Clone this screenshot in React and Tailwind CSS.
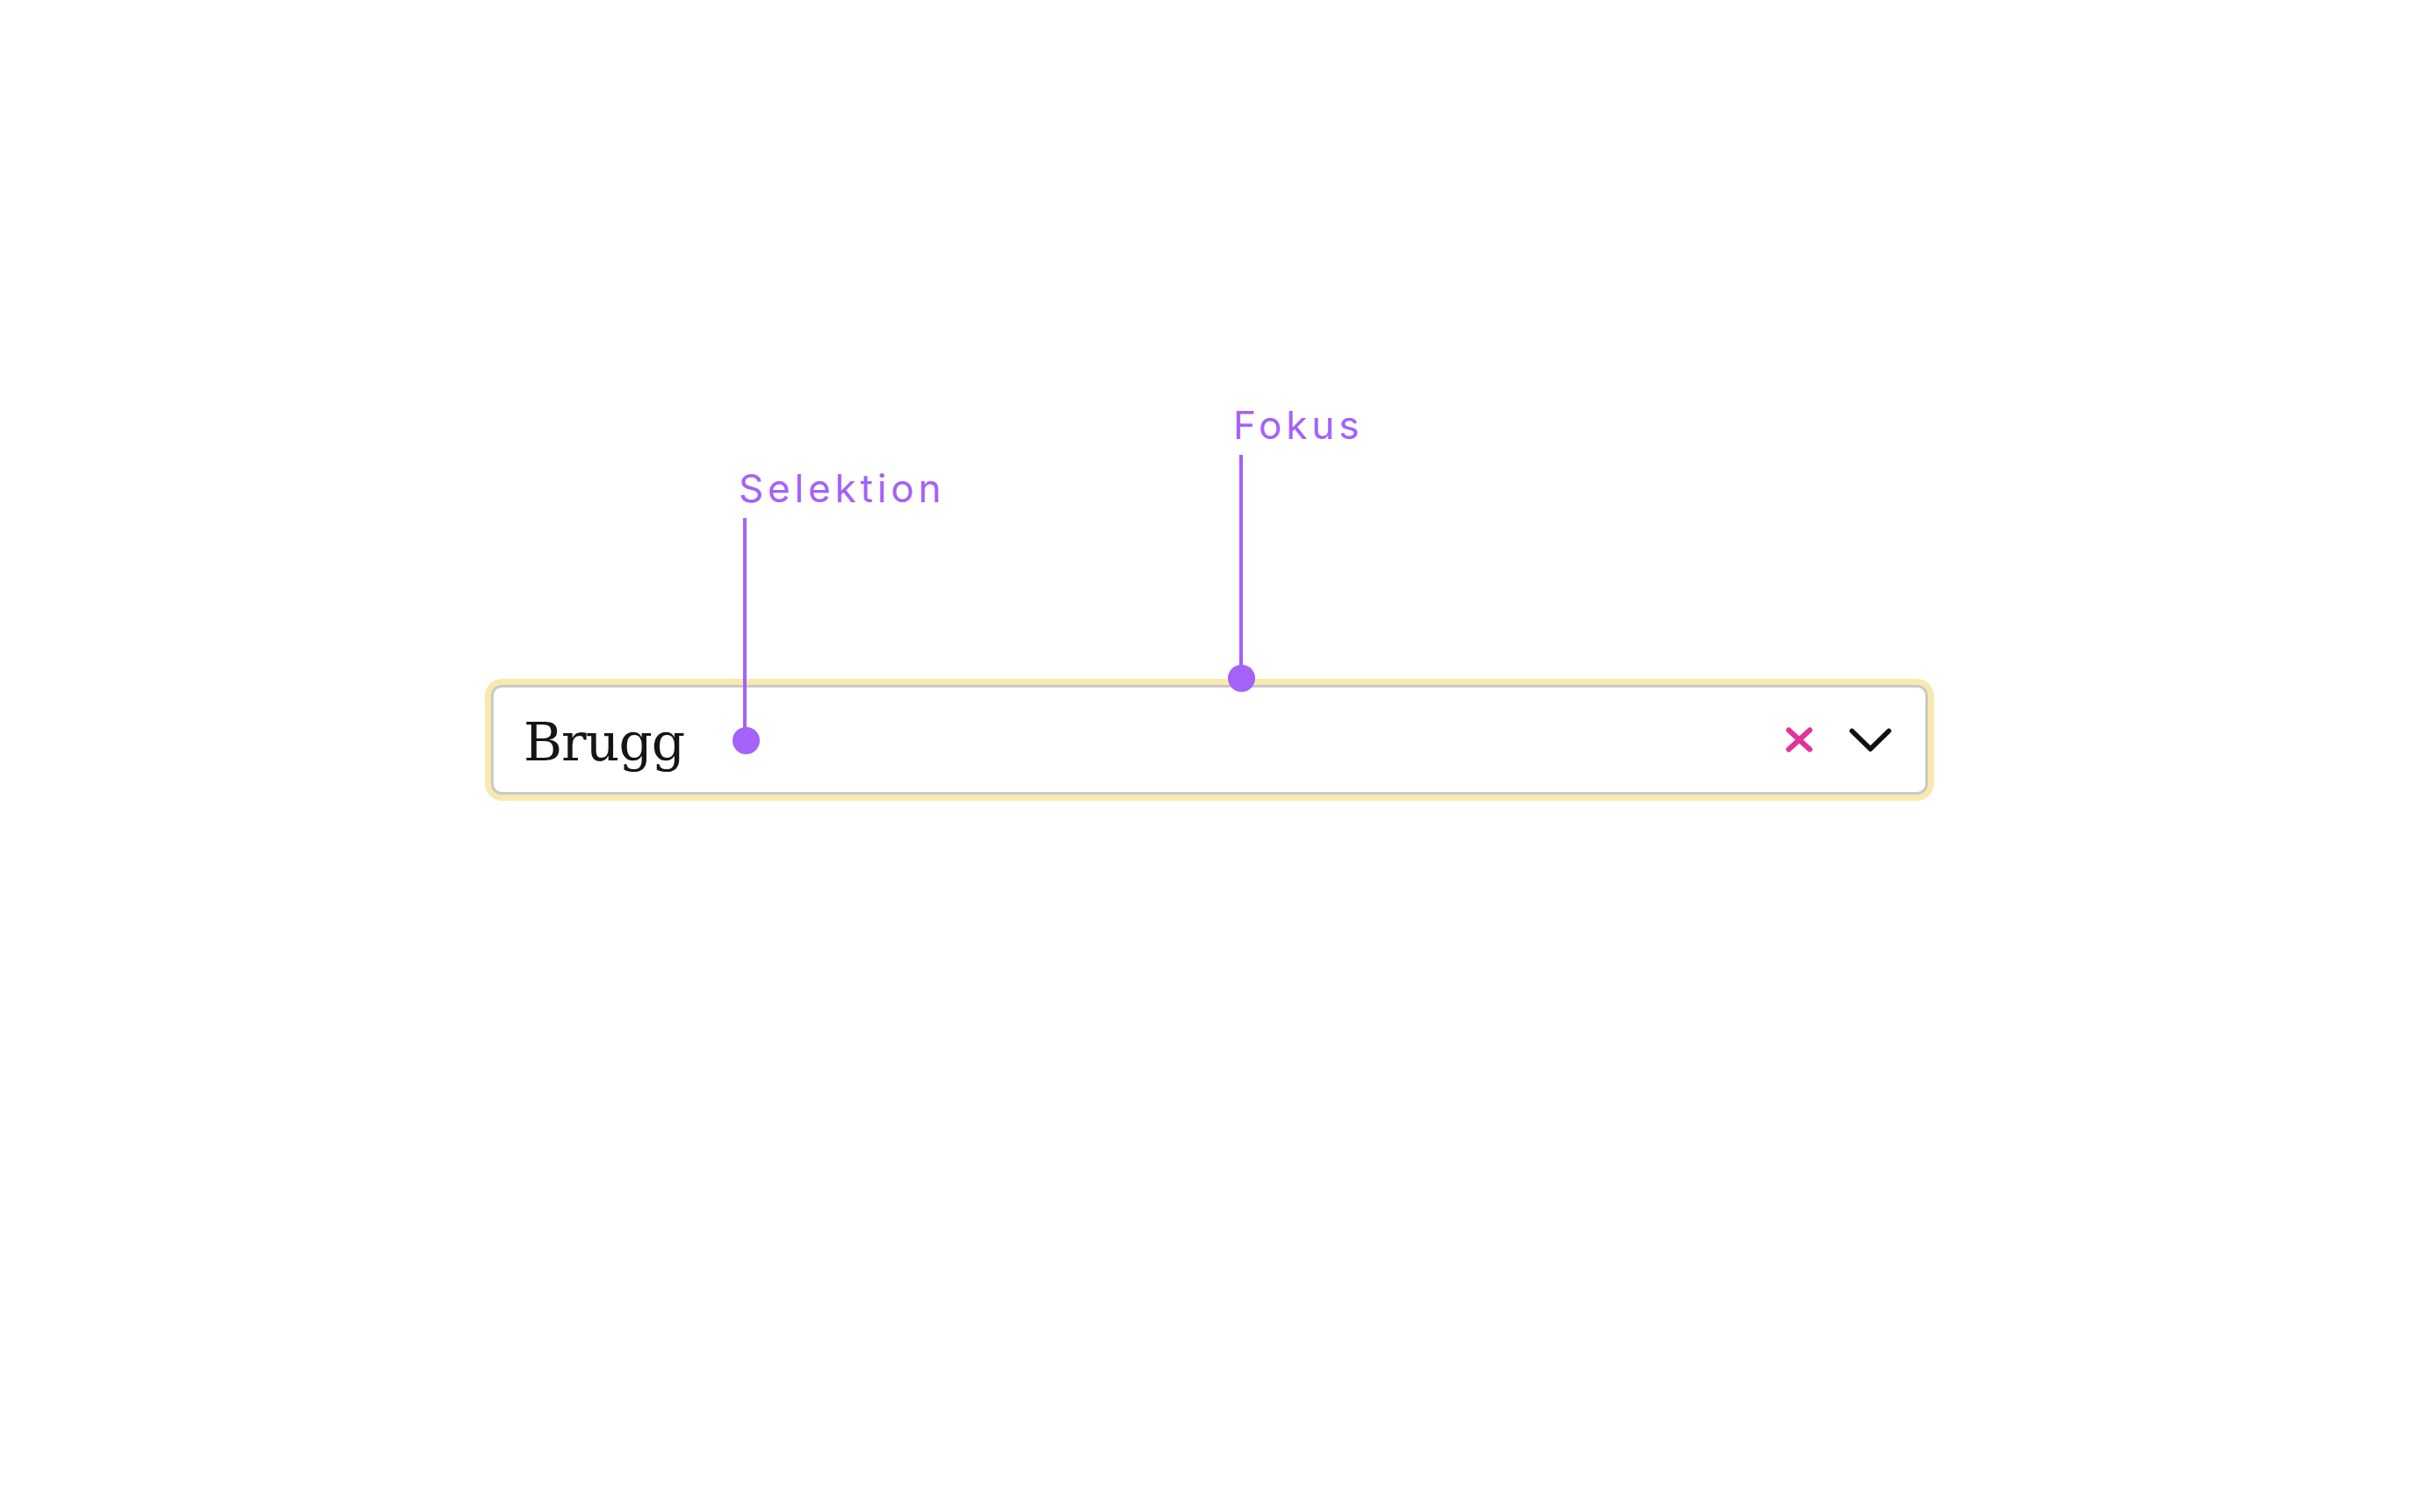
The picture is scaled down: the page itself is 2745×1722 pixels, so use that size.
const Annotation = ({ label, labelClass, lineClass, dotClass }) => (
  <>
    <span
      className={`absolute text-[44px] leading-none tracking-[0.11em] text-[#a462f8] ${labelClass}`}
      style={{ fontFamily: "Inter, 'Open Sans', sans-serif" }}
    >
      {label}
    </span>
    <div className={`absolute w-[4px] bg-[#a462f8] ${lineClass}`} />
    <div className={`absolute w-[31px] h-[31px] rounded-full bg-[#a462f8] ${dotClass}`} />
  </>
);

const App = () => {
  return (
    <div className="relative w-[2745px] h-[1722px] bg-white overflow-hidden">
      {/* Select field with focus ring */}
      <div className="ml-[552px] pt-[773px]">
        <div className="w-[1650px] h-[139px] p-[7px] rounded-[20px] bg-[#f9e9b1]">
          <div className="h-full flex items-center rounded-[12px] border-[3px] border-[#c9c9c9] bg-white pl-[34px] pr-[38px]">
            <span
              className="flex-1 text-[60px] leading-none tracking-[-1px] text-[#151515] pt-[4px]"
              style={{ fontFamily: "'DejaVu Serif', serif" }}
            >
              Brugg
            </span>
            <svg width="31" height="29" viewBox="0 0 31 29" className="shrink-0">
              <path d="M3.5 3.5 L27.5 25.5 M27.5 3.5 L3.5 25.5" stroke="#e2329c" strokeWidth="6" strokeLinecap="round" fill="none" />
            </svg>
            <svg width="49" height="28" viewBox="0 0 49 28" className="ml-[41px] shrink-0">
              <path d="M3.5 3.5 L24.5 24 L45.5 3.5" stroke="#111" strokeWidth="5.5" strokeLinecap="round" strokeLinejoin="round" fill="none" />
            </svg>
          </div>
        </div>
      </div>

      {/* Annotations */}
      <Annotation
        label="Selektion"
        labelClass="left-[841px] top-[534px]"
        lineClass="left-[846px] top-[590px] h-[245px]"
        dotClass="left-[834px] top-[828px]"
      />
      <Annotation
        label="Fokus"
        labelClass="left-[1404px] top-[462px]"
        lineClass="left-[1411px] top-[518px] h-[245px]"
        dotClass="left-[1398px] top-[757px]"
      />
    </div>
  );
};

export default App;
